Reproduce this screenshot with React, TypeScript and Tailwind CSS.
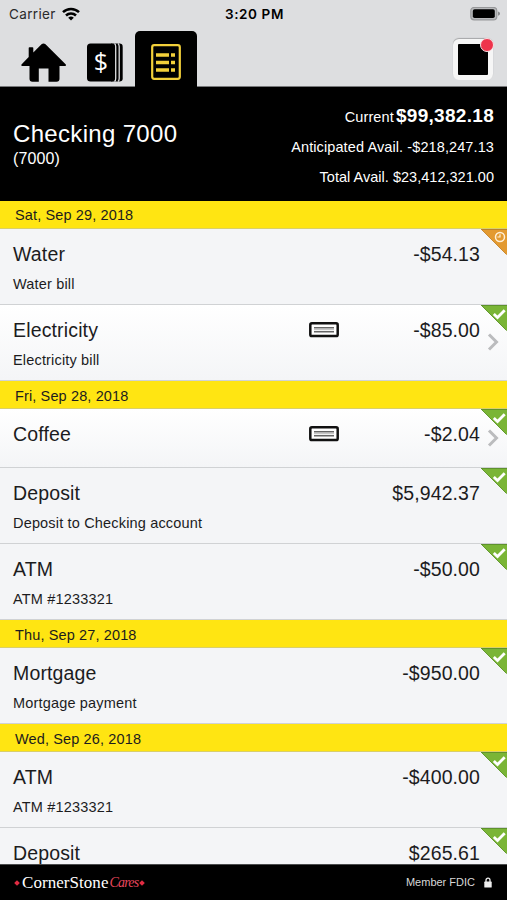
type Status = "cleared" | "pending";

interface Transaction {
  name: string;
  memo?: string;
  amount: string;
  status: Status;
  hasCheck?: boolean;
}

interface Day {
  date: string;
  items: Transaction[];
}

const days: Day[] = [
  {
    date: "Sat, Sep 29, 2018",
    items: [
      { name: "Water", memo: "Water bill", amount: "-$54.13", status: "pending" },
      { name: "Electricity", memo: "Electricity bill", amount: "-$85.00", status: "cleared", hasCheck: true },
    ],
  },
  {
    date: "Fri, Sep 28, 2018",
    items: [
      { name: "Coffee", amount: "-$2.04", status: "cleared", hasCheck: true },
      { name: "Deposit", memo: "Deposit to Checking account", amount: "$5,942.37", status: "cleared" },
      { name: "ATM", memo: "ATM #1233321", amount: "-$50.00", status: "cleared" },
    ],
  },
  {
    date: "Thu, Sep 27, 2018",
    items: [{ name: "Mortgage", memo: "Mortgage payment", amount: "-$950.00", status: "cleared" }],
  },
  {
    date: "Wed, Sep 26, 2018",
    items: [
      { name: "ATM", memo: "ATM #1233321", amount: "-$400.00", status: "cleared" },
      { name: "Deposit", amount: "$265.61", status: "cleared" },
    ],
  },
];

function StatusBar() {
  return (
    <div className="grid h-[28px] grid-cols-3 items-center pl-[9px] pr-[7px] font-['Inter',sans-serif] text-black">
      <div className="flex items-center gap-[6px] text-[13.5px] tracking-[0.35px] text-[#2a2a2b]">
        <span>Carrier</span>
        <svg viewBox="0 0 18 14" className="h-[14px] w-[18px]" fill="none" stroke="#000" strokeWidth="2.5" aria-hidden>
          <path d="M1 5.2a11.4 11.4 0 0 1 16 0" />
          <path d="M4 8.5a7.1 7.1 0 0 1 10 0" />
          <path d="M9 13.6 6.2 10.8a4 4 0 0 1 5.6 0z" fill="#000" stroke="none" />
        </svg>
      </div>
      <div className="text-center text-[13.5px] font-semibold tracking-[0.6px]">3:20 PM</div>
      <div className="flex justify-end">
        <svg viewBox="0 0 30 14" className="h-[14px] w-[30px]" aria-hidden>
          <rect x="0.8" y="0.4" width="26" height="12.4" rx="3.4" fill="#b9babc" stroke="#97989a" strokeWidth="1.2" />
          <rect x="2.8" y="2.2" width="22" height="8.8" rx="1.8" fill="#000" />
          <path d="M28 4.4c1.6.6 2 1.3 2 2.2s-.4 1.6-2 2.2z" fill="#8b8c8e" />
        </svg>
      </div>
    </div>
  );
}

function HomeIcon() {
  return (
    <svg viewBox="0 0 46 40" className="h-[40px] w-[46px]" aria-hidden>
      <path
        d="M20.5 1.3a3 3 0 0 1 4 0L44.6 21.3c.8.8.5 1.6-.6 1.6H38.5v12.9a3 3 0 0 1-3 3H27.5V25.5h-9.7v13.3h-6.3a3 3 0 0 1-3-3V22.9H1.3c-1.1 0-1.4-.8-.6-1.6L7.7 13.9V5q0-.8.8-.8H11.5q.8 0 .8.8v4.4z"
        fill="#000"
      />
    </svg>
  );
}

function MoneyIcon() {
  return (
    <svg viewBox="0 0 36 39" className="h-[39px] w-[36px]" aria-hidden>
      <path d="M24 .5h8.5a3.2 3.2 0 0 1 3.2 3.2v31.6a3.2 3.2 0 0 1-3.2 3.2h-8.5z" fill="#000" />
      <path d="M27.5.5q1.2 1 1.2 3v32q0 2-1.2 3M31 .5q1.2 1 1.2 3v32q0 2-1.2 3" stroke="#dddee0" strokeWidth="1.3" fill="none" />
      <rect x="0" y="0.5" width="27.5" height="38" rx="3.5" fill="#000" />
      <text x="14" y="28" textAnchor="middle" className="font-['Open_Sans',sans-serif] text-[25px]" fill="#fff">
        $
      </text>
    </svg>
  );
}

function ListIcon() {
  return (
    <svg viewBox="0 0 30 36" className="h-[36px] w-[30px]" fill="#f3d03a" aria-hidden>
      <rect x="1.2" y="1.2" width="27.6" height="33.6" rx="2" fill="none" stroke="#f3d03a" strokeWidth="2.2" />
      <path d="M5 9.3h13v3.4H5zM20 9.3h4v3.4h-4zM5 16.8h13v3.4H5zM20 16.8h4v3.4h-4zM5 24.3h13v3.4H5zM20 24.3h4v3.4h-4z" />
    </svg>
  );
}

function TopNav() {
  return (
    <nav className="flex h-[59px] items-end justify-between border-b border-[#77787a] pr-[14px]">
      <div className="flex items-end">
        <div className="pb-[3px] pl-[21px]">
          <HomeIcon />
        </div>
        <div className="pb-[4px] pl-[20px]">
          <MoneyIcon />
        </div>
        <div className="-mb-px ml-[12px] flex h-[56px] w-[62px] justify-center rounded-t-[5px] bg-black pt-[13px]">
          <ListIcon />
        </div>
      </div>
      <div className="relative mb-[6px] h-[41px] w-[40px] rounded-[6px] border-[5px] border-[#f6f6f6] bg-black shadow-[0_-1px_1px_#a5a6a8]">
        <span className="absolute -right-[6px] -top-[6px] size-[14px] rounded-full border border-[#f9dfe2] bg-[#ee344c]" />
      </div>
    </nav>
  );
}

function AccountSummary() {
  return (
    <section className="flex h-[114px] items-center justify-between bg-black pl-[13px] pr-[13px] pt-[3px] text-white">
      <div>
        <h1 className="-mt-px text-[24px] leading-[28px] tracking-[0.33px]">Checking 7000</h1>
        <p className="text-[16px] leading-[22px] tracking-[0.1px]">(7000)</p>
      </div>
      <div className="pt-[2px] text-right text-[14.5px] leading-[30px] tracking-[0.1px]">
        <p>
          Current <b className="-ml-[2px] text-[19px] tracking-[0.3px]">$99,382.18</b>
        </p>
        <p>Anticipated Avail. -$218,247.13</p>
        <p className="tracking-[0.02px]">Total Avail. $23,412,321.00</p>
      </div>
    </section>
  );
}

function CheckIcon() {
  return (
    <svg viewBox="0 0 30 16" className="h-[16px] w-[30px]" fill="none" aria-hidden>
      <rect x="1.3" y="1.3" width="27.4" height="12.8" rx="1.6" fill="#fff" stroke="#111" strokeWidth="2.5" />
      <path d="M5 5.7h20M5 9.7h20" stroke="#666" strokeWidth="1.4" />
      <path d="M5 7.7h20" stroke="#bbb" strokeWidth="1" />
    </svg>
  );
}

function StatusCorner({ status }: { status: Status }) {
  const pending = status === "pending";
  return (
    <svg viewBox="0 0 26 26" className="absolute right-0 top-0 size-[26px]" fill="none" aria-hidden>
      <path d="M0 0h26v26z" fill={pending ? "#e39a31" : "#7ab536"} />
      <path d="M0 .5h26" stroke={pending ? "#b9802f" : "#5e922d"} />
      <path d="M.5.5 25.5 25.5" stroke={pending ? "#c98a34" : "#639931"} />
      {pending ? (
        <>
          <circle cx="19" cy="8" r="4.5" stroke="#fff0d8" strokeWidth="1.5" />
          <path d="M19 5.2V8h-2.6" stroke="#fff0d8" strokeWidth="1.2" />
        </>
      ) : (
        <path d="m12.8 9 3.7 3.5 7.2-7.2" stroke="#fff" strokeWidth="2.8" />
      )}
    </svg>
  );
}

function Row({ item }: { item: Transaction }) {
  return (
    <li
      className={`relative flex shrink-0 items-start border-b border-[#d0d2d4] pl-[13px] pr-[27px] pt-[13px] ${
        item.memo ? "h-[76.2px]" : "h-[59.1px]"
      } ${item.hasCheck ? "bg-linear-to-b from-white to-[#f4f5f7]" : "bg-[#f4f5f7]"}`}
    >
      <div className="flex-1">
        <div className="text-[19.5px] leading-[24px] tracking-[0.15px]">{item.name}</div>
        {item.memo && <div className="mt-[9px] text-[14.5px] leading-[18px] tracking-[0.17px]">{item.memo}</div>}
      </div>
      {item.hasCheck && (
        <div className="pt-[4px]">
          <CheckIcon />
        </div>
      )}
      <div className="w-[141px] text-right text-[19.5px] leading-[24px] tracking-[0.1px]">{item.amount}</div>
      <StatusCorner status={item.status} />
      {item.hasCheck && (
        <svg viewBox="0 0 12 18" className="absolute right-[8px] top-1/2 h-[18px] w-[12px] -translate-y-1/2" aria-hidden>
          <path d="m2 1.5 7.5 7.5L2 16.5" fill="none" stroke="#bbbcbe" strokeWidth="3" />
        </svg>
      )}
    </li>
  );
}

function Footer() {
  return (
    <footer className="flex h-[36px] shrink-0 items-center justify-between border-t border-[#4b4c4d] bg-black pl-[15px] pr-[15px] text-white">
      <div className="flex items-center">
        <span className="mr-[3px] size-[4px] rotate-45 bg-[#e12c43]" />
        <span className="font-['Liberation_Serif',serif] text-[17px] leading-[20px] tracking-[0.05px]">CornerStone</span>
        <span className="ml-px font-['Liberation_Serif',serif] text-[14px] italic leading-[20px] tracking-[-0.8px] text-[#e8465c]">
          Cares
        </span>
        <span className="ml-[2px] size-[4px] rotate-45 bg-[#e12c43]" />
      </div>
      <div className="flex items-center gap-[9px] text-[11px] text-[#d8d8d8]">
        Member FDIC
        <svg viewBox="0 0 8 11" className="h-[11px] w-[8px]" aria-hidden>
          <path d="M2 5V3.2a2 2 0 0 1 4 0V5" fill="none" stroke="#eee" strokeWidth="1.3" />
          <rect x="0.3" y="4.6" width="7.4" height="6" rx="0.6" fill="#eee" />
        </svg>
      </div>
    </footer>
  );
}

export default function App() {
  return (
    <div className="flex h-[900px] w-[507px] flex-col overflow-hidden bg-[#f4f5f7] font-['Liberation_Sans',sans-serif] text-[#1c1c1e]">
      <header className="shrink-0 bg-[#dddee0]">
        <StatusBar />
        <TopNav />
        <AccountSummary />
      </header>
      <main className="min-h-0 flex-1 overflow-hidden">
        {days.map((day) => (
          <section key={day.date}>
            <h2 className="flex h-[27.7px] items-center border-b border-[#d9cf6a] bg-[#ffe512] pl-[15px] pt-[4px] text-[14.5px] tracking-[0.13px]">
              {day.date}
            </h2>
            <ul>
              {day.items.map((item) => (
                <Row key={item.name} item={item} />
              ))}
            </ul>
          </section>
        ))}
      </main>
      <Footer />
    </div>
  );
}
